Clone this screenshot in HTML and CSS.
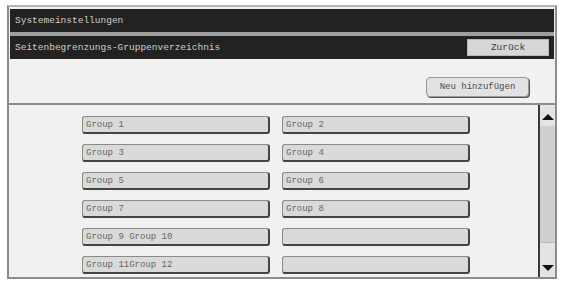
FILE: index.html
```html
<!DOCTYPE html>
<html lang="de">
<head>
  <meta charset="UTF-8">
  <meta name="viewport" content="width=device-width, initial-scale=1.0">
  <title>Systemeinstellungen</title>
  <link rel="stylesheet" href="styles.css">
</head>
<body>
<div class="screen">
  <div class="titlebar">Systemeinstellungen</div>
  <div class="divider"></div>
  <div class="subbar">
    <span>Seitenbegrenzungs-Gruppenverzeichnis</span>
    <button class="back-btn">Zurück</button>
  </div>
  <div class="toolbar">
    <button class="add-btn">Neu hinzufügen</button>
  </div>
  <div class="list-area">
    <div class="group-grid">
      <button class="group-btn">Group 1</button>
      <button class="group-btn">Group 2</button>
      <button class="group-btn">Group 3</button>
      <button class="group-btn">Group 4</button>
      <button class="group-btn">Group 5</button>
      <button class="group-btn">Group 6</button>
      <button class="group-btn">Group 7</button>
      <button class="group-btn">Group 8</button>
      <button class="group-btn">Group 9 Group 10</button>
      <button class="group-btn"></button>
      <button class="group-btn">Group 11Group 12</button>
      <button class="group-btn"></button>
    </div>
    <div class="scrollbar">
      <div class="arrow up"></div>
      <div class="thumb"></div>
      <div class="arrow down"></div>
    </div>
  </div>
</div>
</body>
</html>
```

FILE: styles.css
```css
body {
  margin: 0;
  background-color: #ffffff;
  font-family: "Liberation Mono", "DejaVu Sans Mono", monospace;
}
.screen {
  box-sizing: border-box;
  width: 550px;
  height: 274px;
  margin: 5px 0 0 7px;
  border: 2px solid #8c8c8c;
  border-top-color: #b4b4b4;
  background-color: #f1f1f1;
  display: flex;
  flex-direction: column;
}
.titlebar {
  height: 23px;
  margin: 2px 1px 0 1px;
  background-color: #222222;
  color: #cfcfcf;
  font-size: 9.5px;
  line-height: 23px;
  padding-left: 5px;
}
.divider {
  height: 4px;
  margin: 0 1px;
  background-color: #9e9e9e;
}
.subbar {
  height: 23px;
  margin: 0 1px;
  background-color: #222222;
  color: #cfcfcf;
  font-size: 9.5px;
  display: flex;
  align-items: center;
  justify-content: space-between;
  padding: 0 5px 0 5px;
}
.back-btn {
  width: 82px;
  height: 17px;
  padding: 0;
  border: 1px solid #b8b8b8;
  background-color: #d7d7d7;
  color: #3a3a3a;
  font-family: inherit;
  font-size: 9.5px;
}
.toolbar {
  height: 46px;
  border-bottom: 2px solid #8e8e8e;
  display: flex;
  justify-content: flex-end;
  align-items: flex-start;
  padding: 18px 26px 0 0;
  box-sizing: border-box;
}
.add-btn {
  width: 103px;
  height: 20px;
  padding: 0;
  border: 1px solid #9a9a9a;
  border-radius: 4px;
  background-color: #e2e2e2;
  box-shadow: 1px 1px 0 #555555;
  color: #4a4a4a;
  font-family: inherit;
  font-size: 9px;
}
.list-area {
  flex: 1;
  display: flex;
  justify-content: space-between;
}
.group-grid {
  display: grid;
  grid-template-columns: 188px 188px;
  grid-auto-rows: 18px;
  column-gap: 12px;
  row-gap: 10px;
  padding: 11px 0 0 73px;
}
.group-btn {
  padding: 0 0 0 3px;
  text-align: left;
  border: 1px solid #8a8a8a;
  border-right: 2px solid #444444;
  border-bottom: 2px solid #444444;
  border-radius: 3px;
  background-color: #dadada;
  color: #666666;
  font-family: inherit;
  font-size: 9px;
}
.scrollbar {
  width: 15px;
  border-left: 2px solid #3a3a3a;
  background-color: #e4e4e4;
  display: flex;
  flex-direction: column;
  align-items: center;
}
.arrow {
  width: 0;
  height: 0;
  border-left: 6px solid transparent;
  border-right: 6px solid transparent;
}
.arrow.up {
  margin-top: 9px;
  border-bottom: 6px solid #111111;
}
.arrow.down {
  margin-bottom: 6px;
  border-top: 6px solid #111111;
}
.thumb {
  flex: 1;
  width: 100%;
  margin: 6px 0 22px 0;
  background-color: #cfcfcf;
  border-bottom: 1px solid #bbbbbb;
}
```
